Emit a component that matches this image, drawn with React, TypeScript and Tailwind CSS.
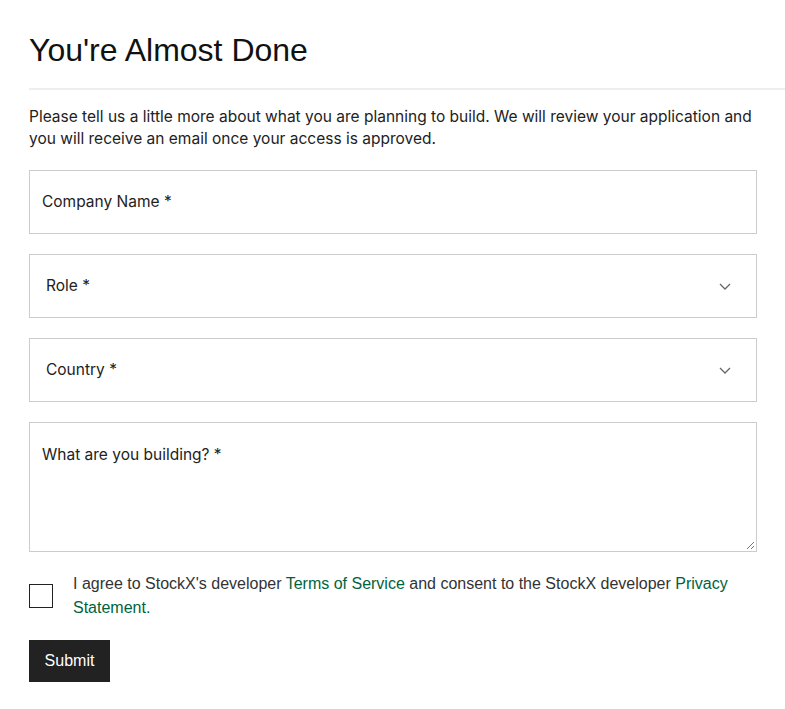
import React from "react";

const Chevron = () => (
  <svg width="12" height="7" viewBox="0 0 12 7" fill="none" className="shrink-0">
    <path d="M1 1l5 5 5-5" stroke="#666" strokeWidth="1.3" />
  </svg>
);

const inter = { fontFamily: 'Inter, "Liberation Sans", sans-serif' };

export default function App() {
  return (
    <div
      className="min-h-[709px] bg-white pl-[29px] pt-[30px] text-[#222]"
      style={{ fontFamily: '"Liberation Sans", Arial, sans-serif' }}
    >
      <h1 className="text-[32px] leading-[40px] text-[#111]">You're Almost Done</h1>
      <div className="mt-[18px] h-[2px] bg-[#eeeeee]" />
      <div className="w-[728px]">
        <p className="mt-[16px] text-[15.5px] leading-[22px] text-[#222]" style={inter}>
          Please tell us a little more about what you are planning to build. We will review your application and you will receive an email once your access is approved.
        </p>
        <div className="mt-[20px] flex flex-col gap-[20px] text-[15.5px] text-[#222]" style={inter}>
          <div className="flex h-[64px] items-center border border-[#cccccc] px-[12px]">
            Company Name *
          </div>
          <div className="flex h-[64px] items-center justify-between border border-[#cccccc] pl-[16px] pr-[25px]">
            <span>Role *</span>
            <Chevron />
          </div>
          <div className="flex h-[64px] items-center justify-between border border-[#cccccc] pl-[16px] pr-[25px]">
            <span>Country *</span>
            <Chevron />
          </div>
          <div className="relative h-[130px] border border-[#cccccc] px-[12px] pt-[21px] leading-[22px]">
            What are you building? *
            <svg className="absolute bottom-[1px] right-[1px]" width="10" height="10" viewBox="0 0 10 10">
              <path d="M9 2L2 9M9 6L6 9" stroke="#777" strokeWidth="1" />
            </svg>
          </div>
        </div>
        <div className="mt-[20px] flex items-start">
          <div className="mt-[12px] h-[24px] w-[24px] shrink-0 border-[1.5px] border-[#222]" />
          <p className="ml-[20px] text-[16px] leading-[24px] text-[#333]">
            I agree to StockX's developer <span className="text-[#006340]">Terms of Service</span> and consent to the StockX developer <span className="text-[#006340]">Privacy Statement.</span>
          </p>
        </div>
        <button className="mt-[20px] flex h-[42px] w-[81px] items-center justify-center bg-[#222222] text-[16px] text-white">
          Submit
        </button>
      </div>
    </div>
  );
}
